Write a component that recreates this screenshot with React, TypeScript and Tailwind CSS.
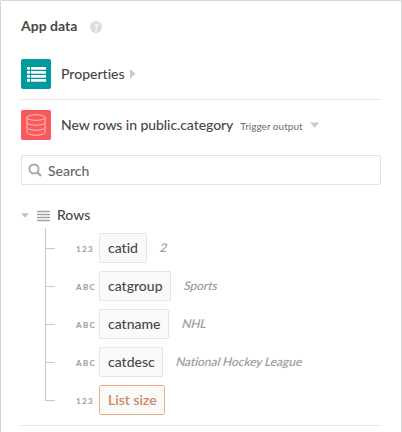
type Field = {
  type: string;
  name: string;
  sample?: string;
  width: string;
};

const fields: Field[] = [
  { type: "123", name: "catid", sample: "2", width: "w-[48px]" },
  { type: "ABC", name: "catgroup", sample: "Sports", width: "w-[72px]" },
  { type: "ABC", name: "catname", sample: "NHL", width: "w-[70px]" },
  { type: "ABC", name: "catdesc", sample: "National Hockey League", width: "w-[64px]" },
  { type: "123", name: "List size", width: "w-[66px]" },
];

function ListIcon() {
  return (
    <svg width="19" height="15" viewBox="0 0 19 15" fill="#fff">
      {[0, 4, 8, 12].map((y) => (
        <g key={y}>
          <rect x="0" y={y} width="3" height="2.7" />
          <rect x="4" y={y} width="15" height="2.7" />
        </g>
      ))}
    </svg>
  );
}

function DatabaseIcon() {
  return (
    <svg width="20" height="22" viewBox="0 0 20 22" fill="none" stroke="#ffc0c0" strokeWidth="1">
      <ellipse cx="10" cy="3.5" rx="9" ry="2.8" />
      <path d="M1 3.5V18.3C1 20 5 21.2 10 21.2S19 20 19 18.3V3.5" />
      <path d="M1 8.3C1 10 5 11.2 10 11.2S19 10 19 8.3M1 13.3C1 15 5 16.2 10 16.2S19 15 19 13.3" />
    </svg>
  );
}

function FieldRow({ field }: { field: Field }) {
  const isSize = !field.sample;
  return (
    <li className="flex h-[30px] items-center">
      <span className="h-px w-[10px] bg-[#c8c8c8]" />
      <span className="ml-[21px] w-[23px] pt-[2px] text-[8px] leading-[10px] font-black tracking-[1.3px] text-[#a3a3a3]">
        {field.type}
      </span>
      <span
        className={`flex h-[30px] items-center rounded-[2px] border bg-[#fafafa] pl-2 text-[14px] leading-[18px] whitespace-nowrap ${field.width} ${
          isSize ? "border-[#e8b184] font-semibold text-[#cf8961]" : "border-[#e4e4e4] font-medium text-[#484848]"
        }`}
      >
        {field.name}
      </span>
      {field.sample && (
        <span className="ml-[13px] inline-block -skew-x-[14deg] pb-px text-[12px] font-semibold tracking-[-0.1px] whitespace-nowrap text-[#a0a0a0]">
          {field.sample}
        </span>
      )}
    </li>
  );
}

export default function App() {
  return (
    <div className="h-[432px] w-[402px] overflow-hidden rounded-t-[2px] border border-b-0 border-[#d6d6d6] bg-white px-5 font-['Lato',sans-serif] text-[#484848] [font-variant-ligatures:none]">
      <header className="flex h-[50px] items-center">
        <h1 className="pb-[2px] text-[14px] font-bold">App data</h1>
        <span className="mt-px ml-[13px] flex size-[12px] items-center justify-center rounded-full bg-[#dcdcdc] text-[10px] leading-3 font-black text-white">
          ?
        </span>
      </header>

      <section className="mt-2 flex h-[30px] items-center">
        <span className="flex size-[30px] items-center justify-center rounded-[2px] bg-[#009a9e]">
          <ListIcon />
        </span>
        <span className="ml-[10px] pb-[2px] text-[14px] font-medium">Properties</span>
        <svg className="ml-[5px]" width="6" height="10" viewBox="0 0 6 10" fill="#cbcbcb">
          <path d="M0 0 5.5 4.8 0 9.6z" />
        </svg>
      </section>

      <hr className="mt-[10px] border-0 border-t border-[#e4e4e4]" />

      <section className="mt-[10px] flex h-[30px] items-center">
        <span className="flex size-[30px] items-center justify-center rounded-[2px] bg-[#f85a5c]">
          <DatabaseIcon />
        </span>
        <span className="ml-[10px] pb-[2px] text-[14px] font-medium tracking-[-0.07px] whitespace-nowrap">
          New rows in public.category
        </span>
        <span className="ml-[7px] pt-[2px] text-[10px] font-medium whitespace-nowrap text-[#777]">Trigger output</span>
        <svg className="ml-[7px]" width="10" height="6" viewBox="0 0 10 6" fill="#cbcbcb">
          <path d="M0 0.5h9.4L4.7 5.8z" />
        </svg>
      </section>

      <div className="mt-[15px] flex h-[30px] items-center rounded-[2px] border border-[#e2e2e2] pl-[6px]">
        <svg width="14" height="14" viewBox="0 0 14 14" fill="none" stroke="#aaa" strokeWidth="2">
          <circle cx="6" cy="6" r="4.6" />
          <path d="M9.2 9.2 13 13" strokeWidth="2.4" />
        </svg>
        <span className="ml-[6px] text-[14px] font-medium text-[#666]">Search</span>
      </div>

      <section className="mt-5 flex h-5 items-center">
        <svg width="8" height="5" viewBox="0 0 8 5" fill="#c4c4c4">
          <path d="M0 0.3h8L4 4.8z" />
        </svg>
        <svg className="mt-px ml-2" width="13" height="12" viewBox="0 0 13 12" shapeRendering="crispEdges">
          <rect width="13" height="12" fill="#e9e9e9" />
          {[1, 4, 7, 10].map((y) => (
            <rect key={y} y={y} width="13" height="1" fill="#a2a2a2" />
          ))}
        </svg>
        <span className="ml-[7px] pb-[2px] text-[14px] font-medium">Rows</span>
      </section>

      <div className="ml-6 flex pt-[3px]">
        <span className="h-[173px] w-px bg-[#c8c8c8]" />
        <ul className="mt-[5px] -ml-px flex flex-col gap-2">
          {fields.map((field) => (
            <FieldRow key={field.name} field={field} />
          ))}
        </ul>
      </div>

      <hr className="mt-[10px] border-0 border-t border-[#e4e4e4]" />
    </div>
  );
}
